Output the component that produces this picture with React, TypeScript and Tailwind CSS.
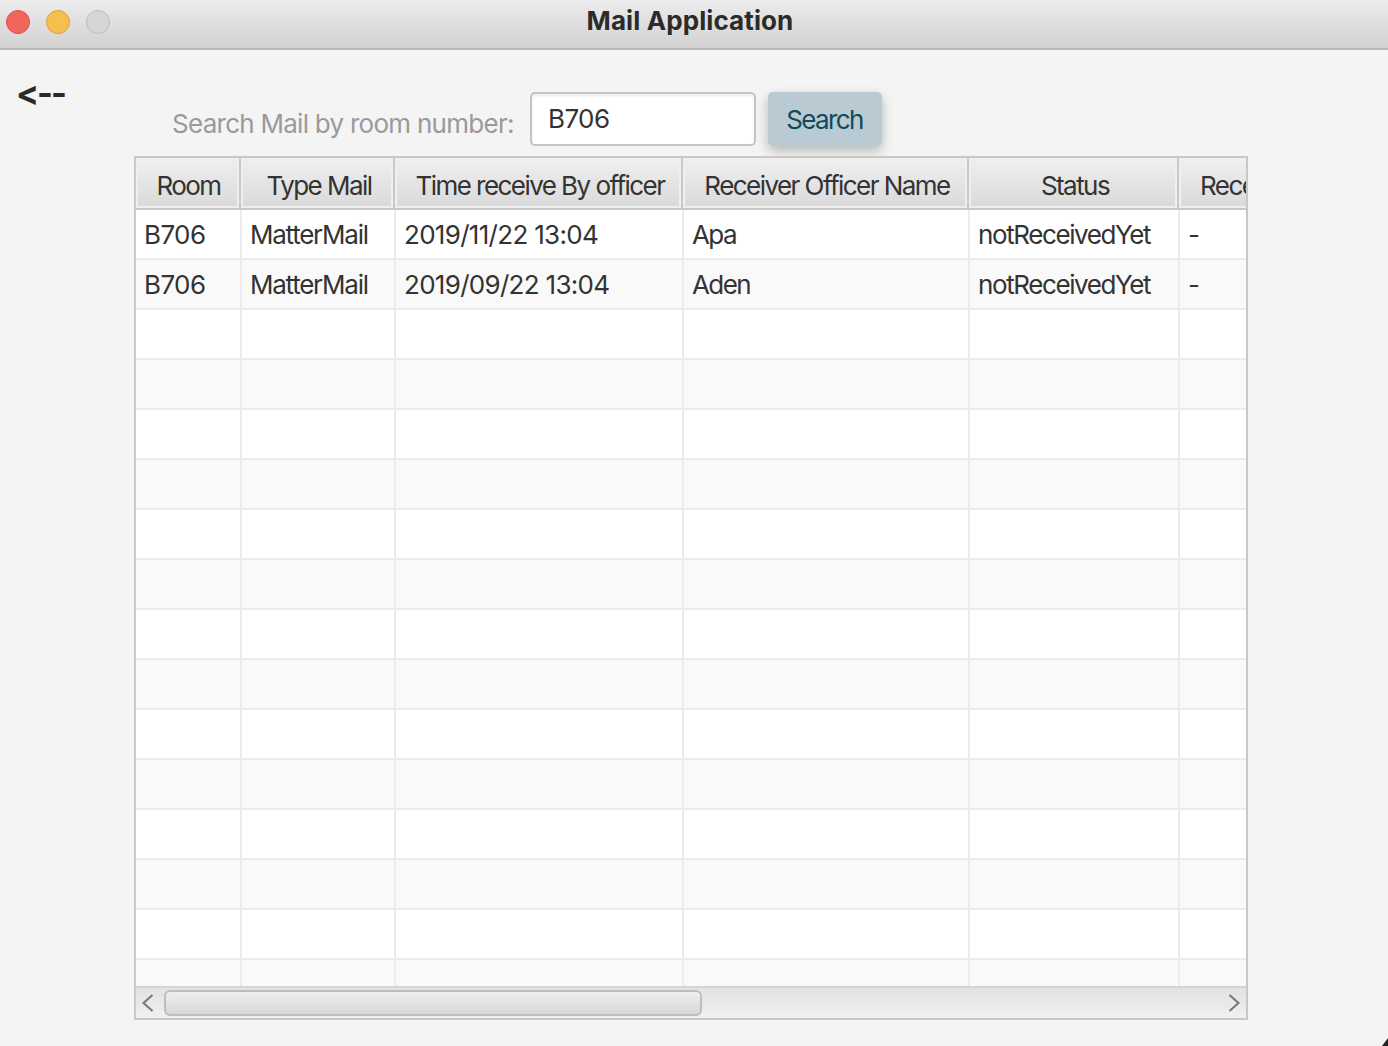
import React from 'react';

const FONT = "font-['Inter','Noto_Sans',sans-serif]";

const columns = [
  { title: 'Room', width: 'w-[106px]', head: 'w-[105px]', track: 'tracking-[-0.6px]' },
  { title: 'Type Mail', width: 'w-[154px]', head: 'w-[154px]', track: 'tracking-[-1.25px]' },
  { title: 'Time receive By officer', width: 'w-[288px]', head: 'w-[288px]', track: 'tracking-[-0.7px]' },
  { title: 'Receiver Officer Name', width: 'w-[286px]', head: 'w-[286px]', track: 'tracking-[-1.6px]' },
  { title: 'Status', width: 'w-[210px]', head: 'w-[210px]', track: 'tracking-[-1.4px]' },
  { title: 'Receiver Name', width: 'w-[200px]', head: 'w-[200px]', track: 'tracking-[-0.6px]' },
];

const rows = [
  ['B706', 'MatterMail', '2019/11/22 13:04', 'Apa', 'notReceivedYet', '-'],
  ['B706', 'MatterMail', '2019/09/22 13:04', 'Aden', 'notReceivedYet', '-'],
];

// rows past the data are drawn empty, the last one gets clipped by the scrollbar
const emptyRows = Array.from({ length: 14 }, (_, i) => i);

function TitleBar() {
  return (
    <div className="relative flex h-[50px] shrink-0 items-center border-b-2 border-[#b9b9b9] bg-gradient-to-b from-[#ececec] to-[#d2d2d2]">
      <div className="mb-[4px] ml-[6px] flex gap-[16px]">
        <div className="h-[24px] w-[24px] rounded-full border border-[#d9534b] bg-[#f2655c]" />
        <div className="h-[24px] w-[24px] rounded-full border border-[#dd9f37] bg-[#f6bf50]" />
        <div className="h-[24px] w-[24px] rounded-full border border-[#bdbdbd] bg-[#d6d6d6]" />
      </div>
      <div className="absolute inset-x-0 top-[4px] pr-[8px] text-center text-[26px] leading-[34px] font-bold tracking-[0.1px] text-[#2b2b2b]">
        Mail Application
      </div>
    </div>
  );
}

function SearchRow() {
  return (
    <div className="flex h-[106px] shrink-0">
      <div className="w-[172px] pt-[20px] pl-[16px] text-[34px] leading-[46px] font-bold tracking-[-2px] text-[#2b2b2b]">
        &lt;--
      </div>
      <div className="flex items-start pt-[42px]">
        <div className="w-[358px] pt-[14px] text-[26px] leading-[36px] tracking-[-0.73px] text-[#9a9a9a]">
          Search Mail by room number:
        </div>
        <div className="flex h-[54px] w-[226px] items-center rounded-[5px] border-2 border-[#c4c4c4] bg-white pb-[2px] pl-[16px] text-[26px] tracking-[-0.6px] text-[#333333] shadow-[inset_0_2px_3px_rgba(0,0,0,0.08)]">
          B706
        </div>
        <div className="ml-[12px] flex h-[54px] w-[114px] items-center justify-center rounded-[5px] bg-[#b9cad2] pr-[1px] text-[26px] tracking-[-1.65px] text-[#0f4a60] shadow-[0_5px_12px_rgba(0,0,0,0.25)]">
          Search
        </div>
      </div>
    </div>
  );
}

function MailTable() {
  return (
    <div className="ml-[134px] flex h-[864px] w-[1114px] flex-col border-2 border-[#c8c8c8] bg-white">
      <div className="flex h-[52px] shrink-0 overflow-hidden border-b-2 border-[#c8c8c8]">
        {columns.map((col) => (
          <div
            key={col.title}
            className={`${col.head} flex h-[50px] shrink-0 items-center justify-center overflow-hidden whitespace-nowrap border-r-2 border-[#c8c8c8] bg-gradient-to-b from-[#f0f0f0] to-[#d9d9d9] pt-[4px] pl-[4px] text-[26px] tracking-[-1.55px] text-[#333333] shadow-[inset_0_0_0_2px_#efefef] first:pl-[2px] last:justify-start last:pl-[21px]`}
          >
            {col.title}
          </div>
        ))}
      </div>
      <div className="min-h-0 flex-1 overflow-hidden">
        {rows.map((row, i) => (
          <div key={i} className={`flex h-[50px] border-b-2 border-[#ececec] ${i % 2 === 0 ? 'bg-white' : 'bg-[#f9f9f9]'}`}>
            {row.map((cell, j) => (
              <div
                key={j}
                className={`${columns[j].width} ${columns[j].track} flex shrink-0 items-center whitespace-nowrap border-r-2 border-[#ececec] pl-[8px] text-[26px] text-[#333333]`}
              >
                {cell}
              </div>
            ))}
          </div>
        ))}
        {emptyRows.map((i) => (
          <div key={i} className={`flex h-[50px] border-b-2 border-[#ececec] ${i % 2 === 0 ? 'bg-white' : 'bg-[#f9f9f9]'}`}>
            {columns.map((col) => (
              <div key={col.title} className={`${col.width} shrink-0 border-r-2 border-[#ececec]`} />
            ))}
          </div>
        ))}
      </div>
      <div className="flex h-[32px] shrink-0 items-center border-t-2 border-[#d4d4d4] bg-gradient-to-b from-[#e2e2e2] to-[#f0f0f0]">
        <svg width="12" height="18" viewBox="0 0 12 18" className="ml-[6px] shrink-0">
          <path d="M10.5 1 1.5 9l9 8" fill="none" stroke="#777777" strokeWidth="2" />
        </svg>
        <div className="ml-[10px] h-[26px] w-[538px] shrink-0 rounded-[6px] border-2 border-[#bdbdbd] bg-gradient-to-b from-[#efefef] to-[#d8d8d8]" />
        <svg width="12" height="18" viewBox="0 0 12 18" className="mr-[6px] ml-auto shrink-0">
          <path d="M1.5 1 10.5 9l-9 8" fill="none" stroke="#777777" strokeWidth="2" />
        </svg>
      </div>
    </div>
  );
}

export default function App() {
  return (
    <div className={`${FONT} relative flex h-[1046px] w-[1388px] flex-col overflow-hidden bg-[#f4f4f4]`}>
      <TitleBar />
      <SearchRow />
      <MailTable />
      {/* window corner peeking in at the bottom right */}
      <svg width="6" height="8" viewBox="0 0 6 8" className="absolute right-0 bottom-0">
        <path d="M6 0V8H0Z" fill="#222222" />
      </svg>
    </div>
  );
}
